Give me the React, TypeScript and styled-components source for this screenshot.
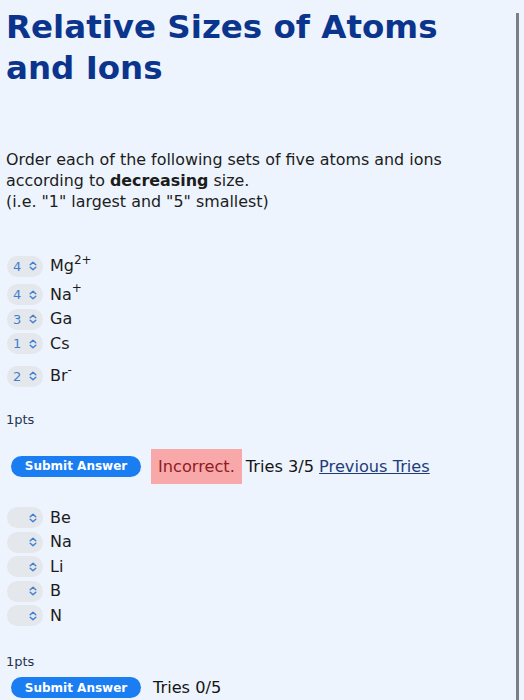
import * as React from "react";
import styled, { createGlobalStyle } from "styled-components";

const GlobalStyle = createGlobalStyle`
  html, body {
    margin: 0;
    padding: 0;
    background: #edf4fd;
  }
  body {
    font-family: "DejaVu Sans", Verdana, sans-serif;
    color: #1c1c1c;
  }
`;

const Page = styled.div`
  display: flex;
  min-height: 100vh;
`;

const Content = styled.div`
  flex: 1;
  padding: 0 0 0 6px;
`;

const Divider = styled.div`
  width: 3px;
  margin: 13px 5px 0 0;
  background: #7b8088;
`;

const Title = styled.h1`
  margin: 7px 0 0;
  font-size: 32.5px;
  line-height: 41px;
  font-weight: bold;
  color: #0b358c;
  width: 480px;
`;

const Prompt = styled.p`
  margin: 60px 0 0;
  font-size: 15.9px;
  line-height: 21px;
`;

const ItemList = styled.div<{ $top: number }>`
  display: flex;
  flex-direction: column;
  margin-top: ${(p) => p.$top}px;
`;

const ItemRow = styled.div<{ $extra: number }>`
  display: flex;
  align-items: center;
  gap: 7px;
  height: 24.5px;
  margin-top: ${(p) => p.$extra}px;
`;

const Picker = styled.div`
  display: flex;
  align-items: center;
  justify-content: flex-end;
  gap: 6px;
  width: 36px;
  height: 21px;
  box-sizing: border-box;
  padding: 0 6px 0 6px;
  margin-left: 1px;
  border-radius: 11px;
  background: #e4e7ec;
  font-size: 13px;
  color: #3f7fd0;
`;

const PickerValue = styled.span`
  flex: 1;
  text-align: left;
`;

const Symbol = styled.span`
  font-size: 16px;
  line-height: 20px;
`;

const Charge = styled.sup`
  font-size: 12px;
  line-height: 0;
  position: relative;
  top: -1px;
`;

const Points = styled.div<{ $top: number }>`
  margin-top: ${(p) => p.$top}px;
  font-size: 13px;
  line-height: 16px;
  color: #253450;
`;

const Actions = styled.div<{ $top: number }>`
  display: flex;
  align-items: center;
  margin-top: ${(p) => p.$top}px;
  font-size: 16.2px;
`;

const SubmitButton = styled.button`
  margin-left: 5px;
  height: 21px;
  width: 130px;
  padding: 0;
  border: none;
  border-radius: 11px;
  background: #1a7df2;
  color: #fff;
  font-family: "DejaVu Sans", Verdana, sans-serif;
  font-size: 12px;
  font-weight: bold;
`;

const Verdict = styled.span`
  margin-left: 10px;
  padding: 0 7px;
  height: 35px;
  display: flex;
  align-items: center;
  background: #f8a8a8;
  color: #8f1b25;
`;

const Tries = styled.span<{ $gap: number }>`
  margin-left: ${(p) => p.$gap}px;
  color: #151515;
`;

const PreviousLink = styled.a`
  margin-left: 5px;
  color: #1f3c7a;
  text-decoration: underline;
`;

const Chevrons = () => (
  <svg width="8" height="10" viewBox="0 0 8 10" fill="none">
    <path
      d="M1.2 3.8 L4 1.2 L6.8 3.8 M1.2 6.2 L4 8.8 L6.8 6.2"
      stroke="#3f7fd0"
      strokeWidth="1.4"
      strokeLinecap="round"
      strokeLinejoin="round"
    />
  </svg>
);

type Item = { value: string; symbol: string; charge?: string; extra: number };

const firstSet: Item[] = [
  { value: "4", symbol: "Mg", charge: "2+", extra: 0 },
  { value: "4", symbol: "Na", charge: "+", extra: 4 },
  { value: "3", symbol: "Ga", extra: 0 },
  { value: "1", symbol: "Cs", extra: 0 },
  { value: "2", symbol: "Br", charge: "-", extra: 8 },
];

const secondSet: Item[] = [
  { value: "", symbol: "Be", extra: 0 },
  { value: "", symbol: "Na", extra: 0 },
  { value: "", symbol: "Li", extra: 0 },
  { value: "", symbol: "B", extra: 0 },
  { value: "", symbol: "N", extra: 0 },
];

const Items = ({ items, top }: { items: Item[]; top: number }) => (
  <ItemList $top={top}>
    {items.map((item, i) => (
      <ItemRow key={i} $extra={item.extra}>
        <Picker>
          <PickerValue>{item.value}</PickerValue>
          <Chevrons />
        </Picker>
        <Symbol>
          {item.symbol}
          {item.charge && <Charge>{item.charge}</Charge>}
        </Symbol>
      </ItemRow>
    ))}
  </ItemList>
);

export default function App() {
  return (
    <Page>
      <GlobalStyle />
      <Content>
        <Title>
          Relative Sizes of Atoms
          <br />
          and Ions
        </Title>
        <Prompt>
          Order each of the following sets of five atoms and ions
          <br />
          according to <b>decreasing</b> size.
          <br />
          (i.e. "1" largest and "5" smallest)
        </Prompt>

        <Items items={firstSet} top={42} />
        <Points $top={23}>1pts</Points>
        <Actions $top={21}>
          <SubmitButton>Submit Answer</SubmitButton>
          <Verdict>Incorrect.</Verdict>
          <Tries $gap={4}>Tries 3/5</Tries>
          <PreviousLink href="#">Previous Tries</PreviousLink>
        </Actions>

        <Items items={secondSet} top={22} />
        <Points $top={26}>1pts</Points>
        <Actions $top={7}>
          <SubmitButton>Submit Answer</SubmitButton>
          <Tries $gap={12}>Tries 0/5</Tries>
        </Actions>
      </Content>
      <Divider />
    </Page>
  );
}
